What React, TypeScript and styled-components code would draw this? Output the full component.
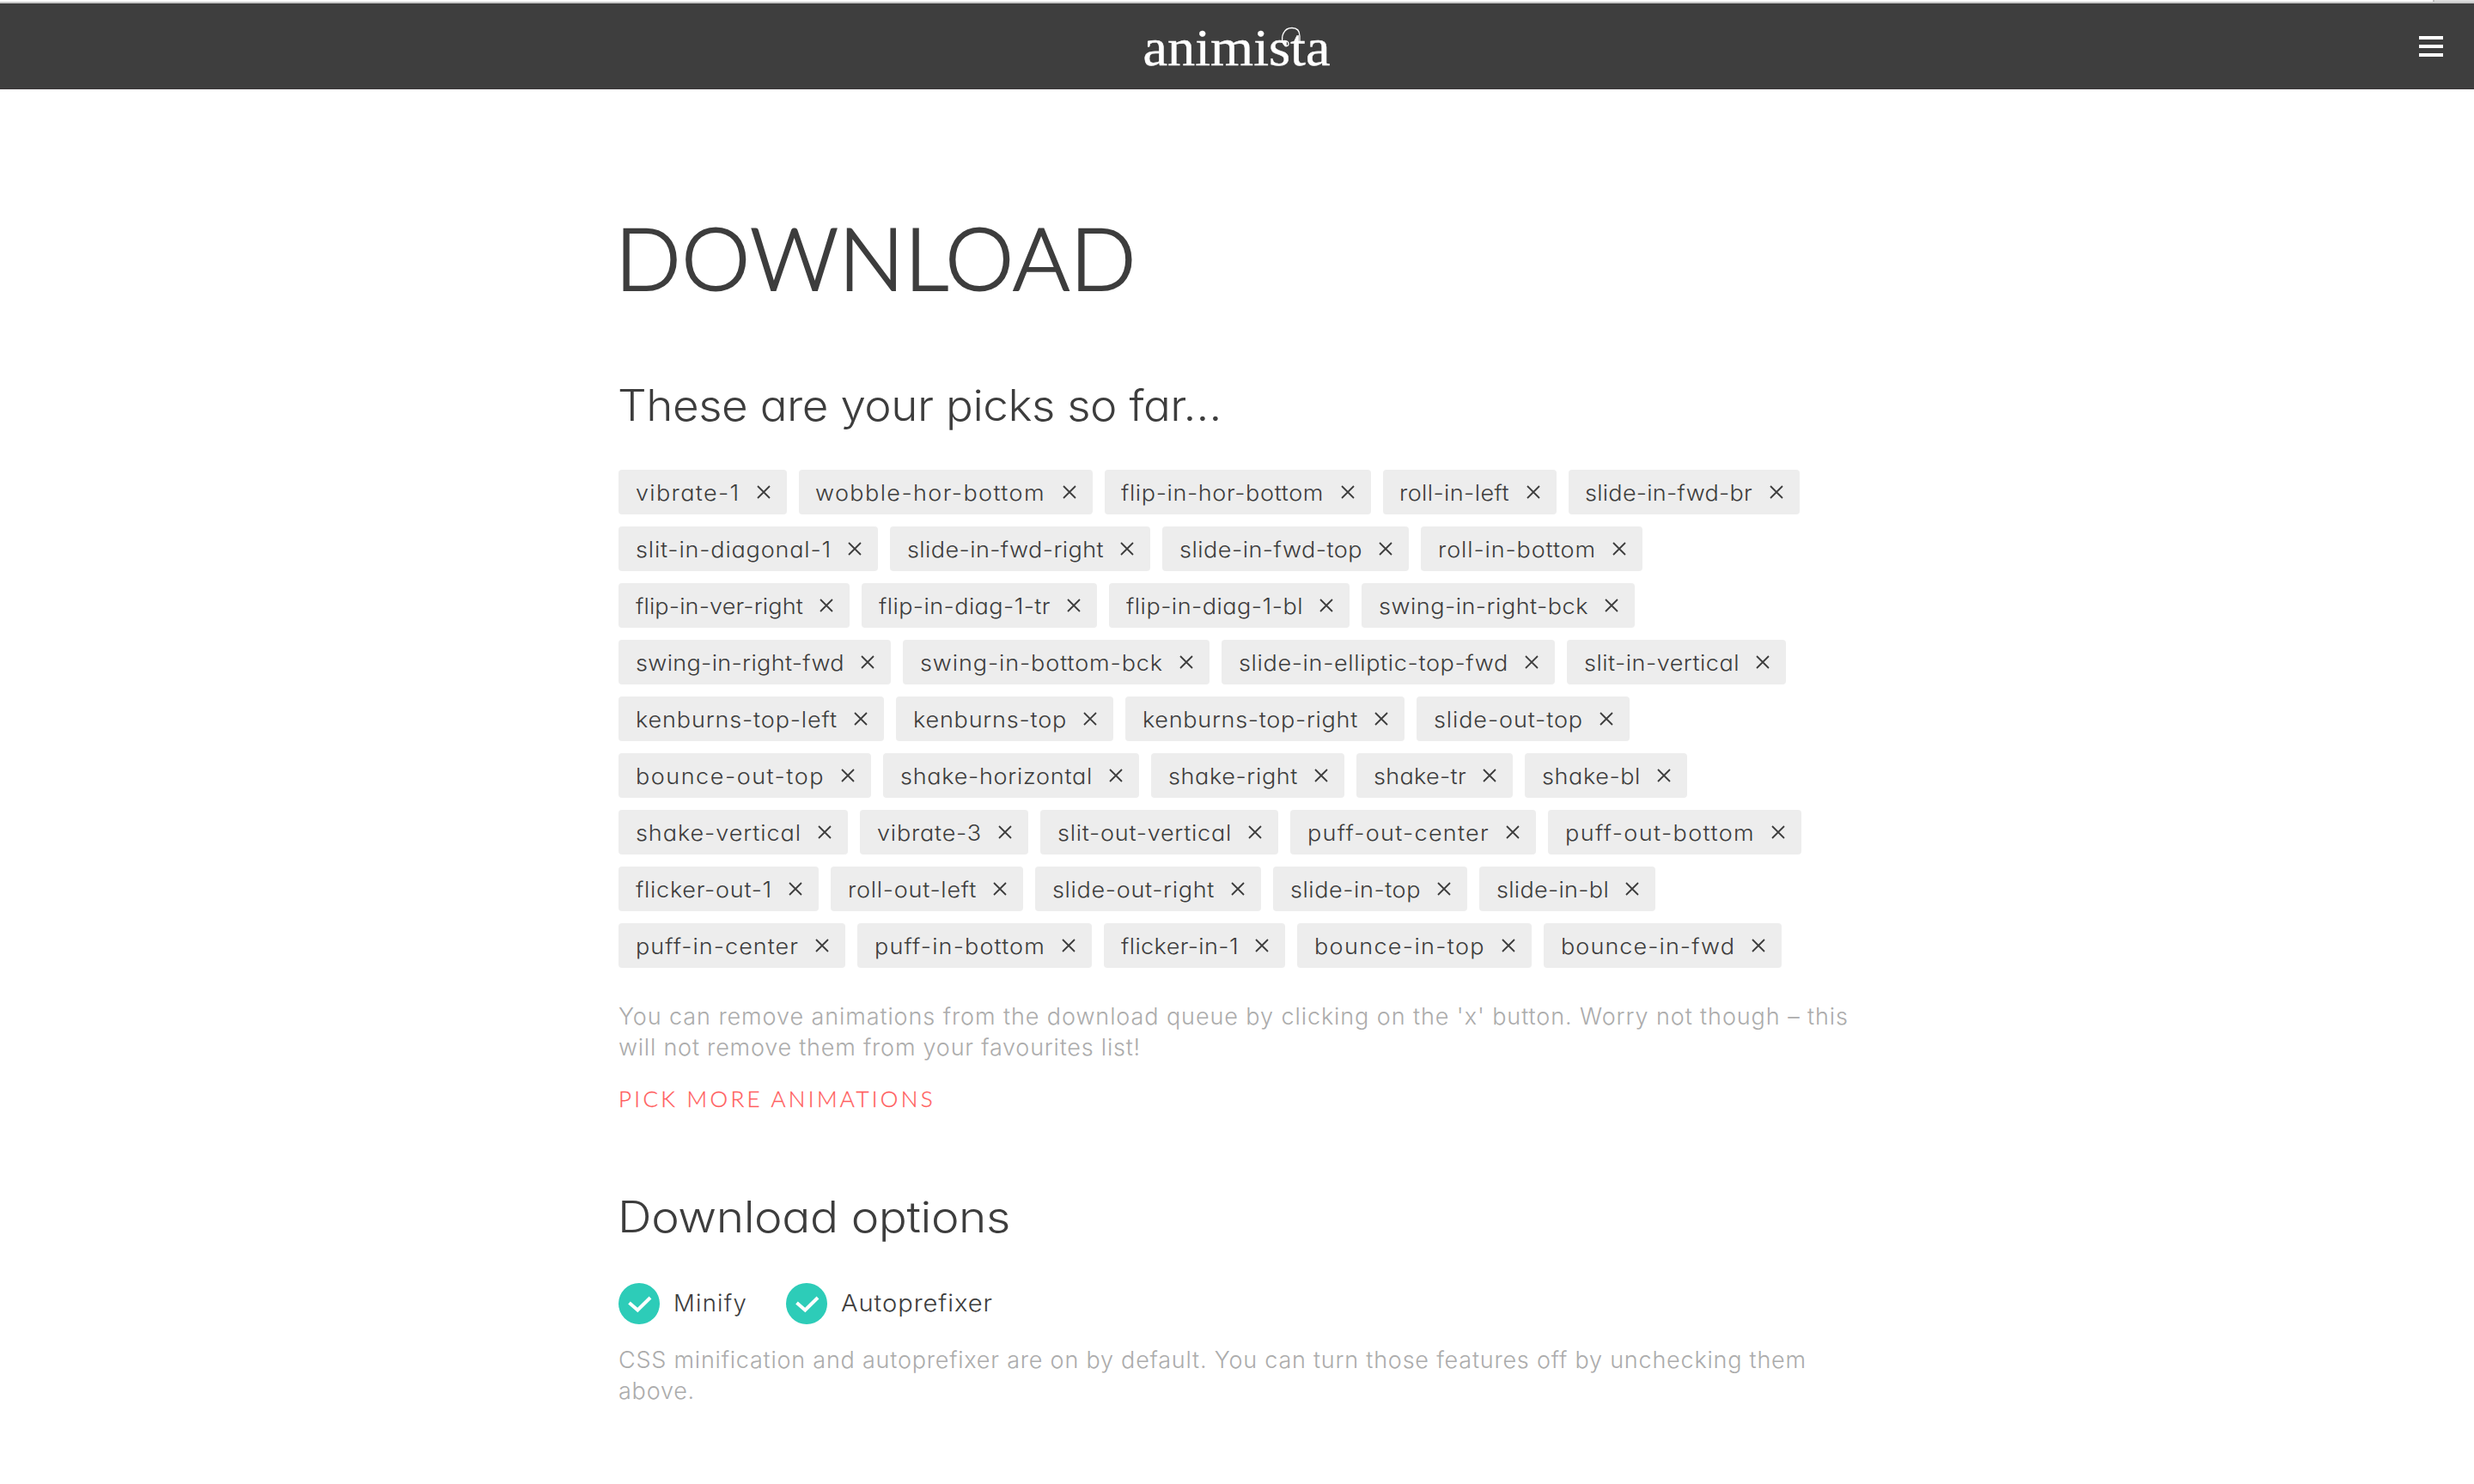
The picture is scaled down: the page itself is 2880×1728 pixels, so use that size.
import React, { useLayoutEffect, useRef } from "react";
import styled, { createGlobalStyle } from "styled-components";

const GlobalStyle = createGlobalStyle`
  body {
    margin: 0;
    background: #ffffff;
    color: #3d3d3d;
    font-family: Inter, "Liberation Sans", sans-serif;
    font-weight: 340;
  }
`;

const TopLine = styled.div`
  display: flex;
  justify-content: flex-end;
  height: 2px;
  border-bottom: solid 2px #c8c8c8;
`;

const TopLineEnd = styled.div`
  width: 46px;
  border-left: solid 2px #c0c0c0;
  background-color: #dedede;
`;

const Header = styled.header`
  display: grid;
  grid-template-columns: 1fr 220px 1fr;
  align-items: center;
  height: 100px;
  box-sizing: border-box;
  background-color: #3e3e3e;
  border-bottom: solid 1px #3a3638;
`;

const LogoLink = styled.a`
  grid-column: 2;
  display: block;
  height: 99px;
`;

const MenuButton = styled.button`
  justify-self: end;
  display: flex;
  flex-direction: column;
  gap: 6px;
  margin: 0 36px 0 0;
  padding: 0;
  border: none;
  background: none;
`;

const MenuBar = styled.span`
  width: 28px;
  height: 4px;
  background-color: #ffffff;
`;

const Main = styled.main`
  width: 1440px;
  margin: 0 auto;
  padding-top: 135px;
  font-feature-settings: "cv11";
`;

const Title = styled.h1`
  margin: 0 0 0 -4px;
  font-family: Lato, sans-serif;
  font-size: 101px;
  font-weight: 300;
  line-height: 120px;
  -webkit-text-stroke: 2px #3d3d3d;
`;

const SubTitle = styled.h2<{ $top: number }>`
  margin: ${({ $top }) => $top}px 0 0 -1px;
  font-size: 50px;
  font-weight: 350;
  line-height: 60px;
`;

const Picks = styled.ul`
  display: flex;
  flex-wrap: wrap;
  gap: 14px;
  margin: 45px 0 0;
  padding: 0;
  list-style: none;
`;

const Pick = styled.li<{ $width: number }>`
  display: flex;
  align-items: center;
  justify-content: space-between;
  width: ${({ $width }) => $width}px;
  height: 52px;
  padding: 0 19px 0 19.5px;
  box-sizing: border-box;
  border-radius: 4px;
  background-color: #ededed;
  font-size: 25.5px;
  line-height: 53px;
`;

const RemoveButton = styled.button`
  display: flex;
  padding: 0;
  border: none;
  background: none;
`;

const Note = styled.p<{ $top: number }>`
  margin: ${({ $top }) => $top}px 0 0;
  color: #acacac;
  font-size: 27px;
  font-weight: 300;
  font-feature-settings: normal;
  line-height: 36px;
`;

const MoreLink = styled.a`
  display: block;
  margin-top: 23px;
  color: #ff5c5c;
  font-family: Lato, sans-serif;
  font-size: 26px;
  font-weight: 300;
  line-height: 36px;
  text-transform: uppercase;
  -webkit-text-stroke: 0.3px #ff5c5c;
`;

const Options = styled.div`
  display: flex;
  gap: 45px;
  margin-top: 46px;
`;

const Option = styled.label`
  display: flex;
  align-items: center;
  gap: 16px;
  font-size: 27.5px;
  line-height: 49px;
`;

const FitBox = styled.span<{ $width: number }>`
  display: block;
  width: ${({ $width }) => $width}px;
  white-space: nowrap;
`;

const FitLine = styled.span<{ $stretch: number }>`
  display: block;
  width: max-content;
  transform: scaleX(${({ $stretch }) => $stretch});
  transform-origin: 0 50%;
`;

interface IFit {
  width: number;
  stretch?: number;
  children: string;
}

// Tracks a line out (or in) so that it takes exactly the given width,
// after its letters have been widened by `stretch`.
const Fit: React.FC<IFit> = ({ width, stretch = 1, children }) => {
  const ref = useRef<HTMLSpanElement>(null);

  useLayoutEffect(() => {
    const el = ref.current;
    if (!el) return;
    el.style.letterSpacing = "0.001px";
    const natural = el.getBoundingClientRect().width / stretch;
    el.style.letterSpacing = `${
      (width / stretch - natural) / children.length
    }px`;
  }, [width, stretch, children]);

  return (
    <FitBox $width={width}>
      <FitLine ref={ref} $stretch={stretch}>
        {children}
      </FitLine>
    </FitBox>
  );
};

const Logo = () => (
  <svg width="220" height="99" viewBox="1330 4 220 99" fill="none">
    <text
      x="1330.5"
      y="75.5"
      fill="#ffffff"
      stroke="#ffffff"
      strokeWidth="0.4"
      fontFamily="Liberation Serif, serif"
      fontSize="61"
      textLength="218"
      lengthAdjust="spacingAndGlyphs"
    >
      animista
    </text>
    <path
      d="M1491 49C1496 46 1500 48 1500 51C1500 54.500 1495.500 54.500 1493.500 50C1491 43 1494 32.500 1504 32.500C1510 32.500 1513 36 1513 42V50"
      stroke="#ffffff"
      strokeWidth="1.300"
    />
  </svg>
);

const Cross = () => (
  <svg width="16" height="16" viewBox="0 0 16 16" stroke="#3d3d3d">
    <path d="M1 1L15 15M15 1L1 15" strokeWidth="1.800" />
  </svg>
);

const Check = () => (
  <svg width="48" height="48" viewBox="0 0 48 48" fill="none">
    <circle cx="24" cy="24" r="24" fill="#2dccb8" />
    <path d="M12.500 23L22.300 31.500L37 17" stroke="#ffffff" strokeWidth="4" />
  </svg>
);

const picks: [string, number][] = [
  ["vibrate-1", 195.5],
  ["wobble-hor-bottom", 342],
  ["flip-in-hor-bottom", 310],
  ["roll-in-left", 202],
  ["slide-in-fwd-br", 269],
  ["slit-in-diagonal-1", 302],
  ["slide-in-fwd-right", 303],
  ["slide-in-fwd-top", 287],
  ["roll-in-bottom", 258],
  ["flip-in-ver-right", 269],
  ["flip-in-diag-1-tr", 274],
  ["flip-in-diag-1-bl", 280],
  ["swing-in-right-bck", 318],
  ["swing-in-right-fwd", 317],
  ["swing-in-bottom-bck", 357],
  ["slide-in-elliptic-top-fwd", 388],
  ["slit-in-vertical", 255],
  ["kenburns-top-left", 309],
  ["kenburns-top", 253],
  ["kenburns-top-right", 325],
  ["slide-out-top", 248],
  ["bounce-out-top", 294],
  ["shake-horizontal", 298],
  ["shake-right", 225],
  ["shake-tr", 182],
  ["shake-bl", 189],
  ["shake-vertical", 267],
  ["vibrate-3", 196],
  ["slit-out-vertical", 277],
  ["puff-out-center", 286],
  ["puff-out-bottom", 295],
  ["flicker-out-1", 233],
  ["roll-out-left", 224],
  ["slide-out-right", 263],
  ["slide-in-top", 226],
  ["slide-in-bl", 205],
  ["puff-in-center", 264],
  ["puff-in-bottom", 273],
  ["flicker-in-1", 211],
  ["bounce-in-top", 273],
  ["bounce-in-fwd", 277],
];

const App: React.FC = () => (
  <>
    <GlobalStyle />
    <TopLine>
      <TopLineEnd />
    </TopLine>
    <Header>
      <LogoLink>
        <Logo />
      </LogoLink>
      <MenuButton aria-label="Menu">
        <MenuBar />
        <MenuBar />
        <MenuBar />
      </MenuButton>
    </Header>
    <Main>
      <Title>
        <Fit width={607}>DOWNLOAD</Fit>
      </Title>
      <SubTitle $top={83}>
        <Fit width={703} stretch={1.06}>
          These are your picks so far…
        </Fit>
      </SubTitle>
      <Picks>
        {picks.map(([name, width]) => (
          <Pick key={name} $width={width}>
            <Fit width={width - 74} stretch={1.06}>
              {name}
            </Fit>
            <RemoveButton aria-label="Remove">
              <Cross />
            </RemoveButton>
          </Pick>
        ))}
      </Picks>
      <Note $top={39}>
        <Fit width={1432}>
          You can remove animations from the download queue by clicking on the 'x' button. Worry not though – this
        </Fit>
        <Fit width={608}>will not remove them from your favourites list!</Fit>
      </Note>
      <MoreLink>
        <Fit width={369}>Pick more animations</Fit>
      </MoreLink>
      <SubTitle $top={90}>
        <Fit width={457} stretch={1.1}>
          Download options
        </Fit>
      </SubTitle>
      <Options>
        <Option>
          <Check />
          <Fit width={86}>Minify</Fit>
        </Option>
        <Option>
          <Check />
          <Fit width={177} stretch={1.06}>
            Autoprefixer
          </Fit>
        </Option>
      </Options>
      <Note $top={24}>
        <Fit width={1383}>
          CSS minification and autoprefixer are on by default. You can turn those features off by unchecking them
        </Fit>
        <Fit width={89}>above.</Fit>
      </Note>
    </Main>
  </>
);

export default App;
